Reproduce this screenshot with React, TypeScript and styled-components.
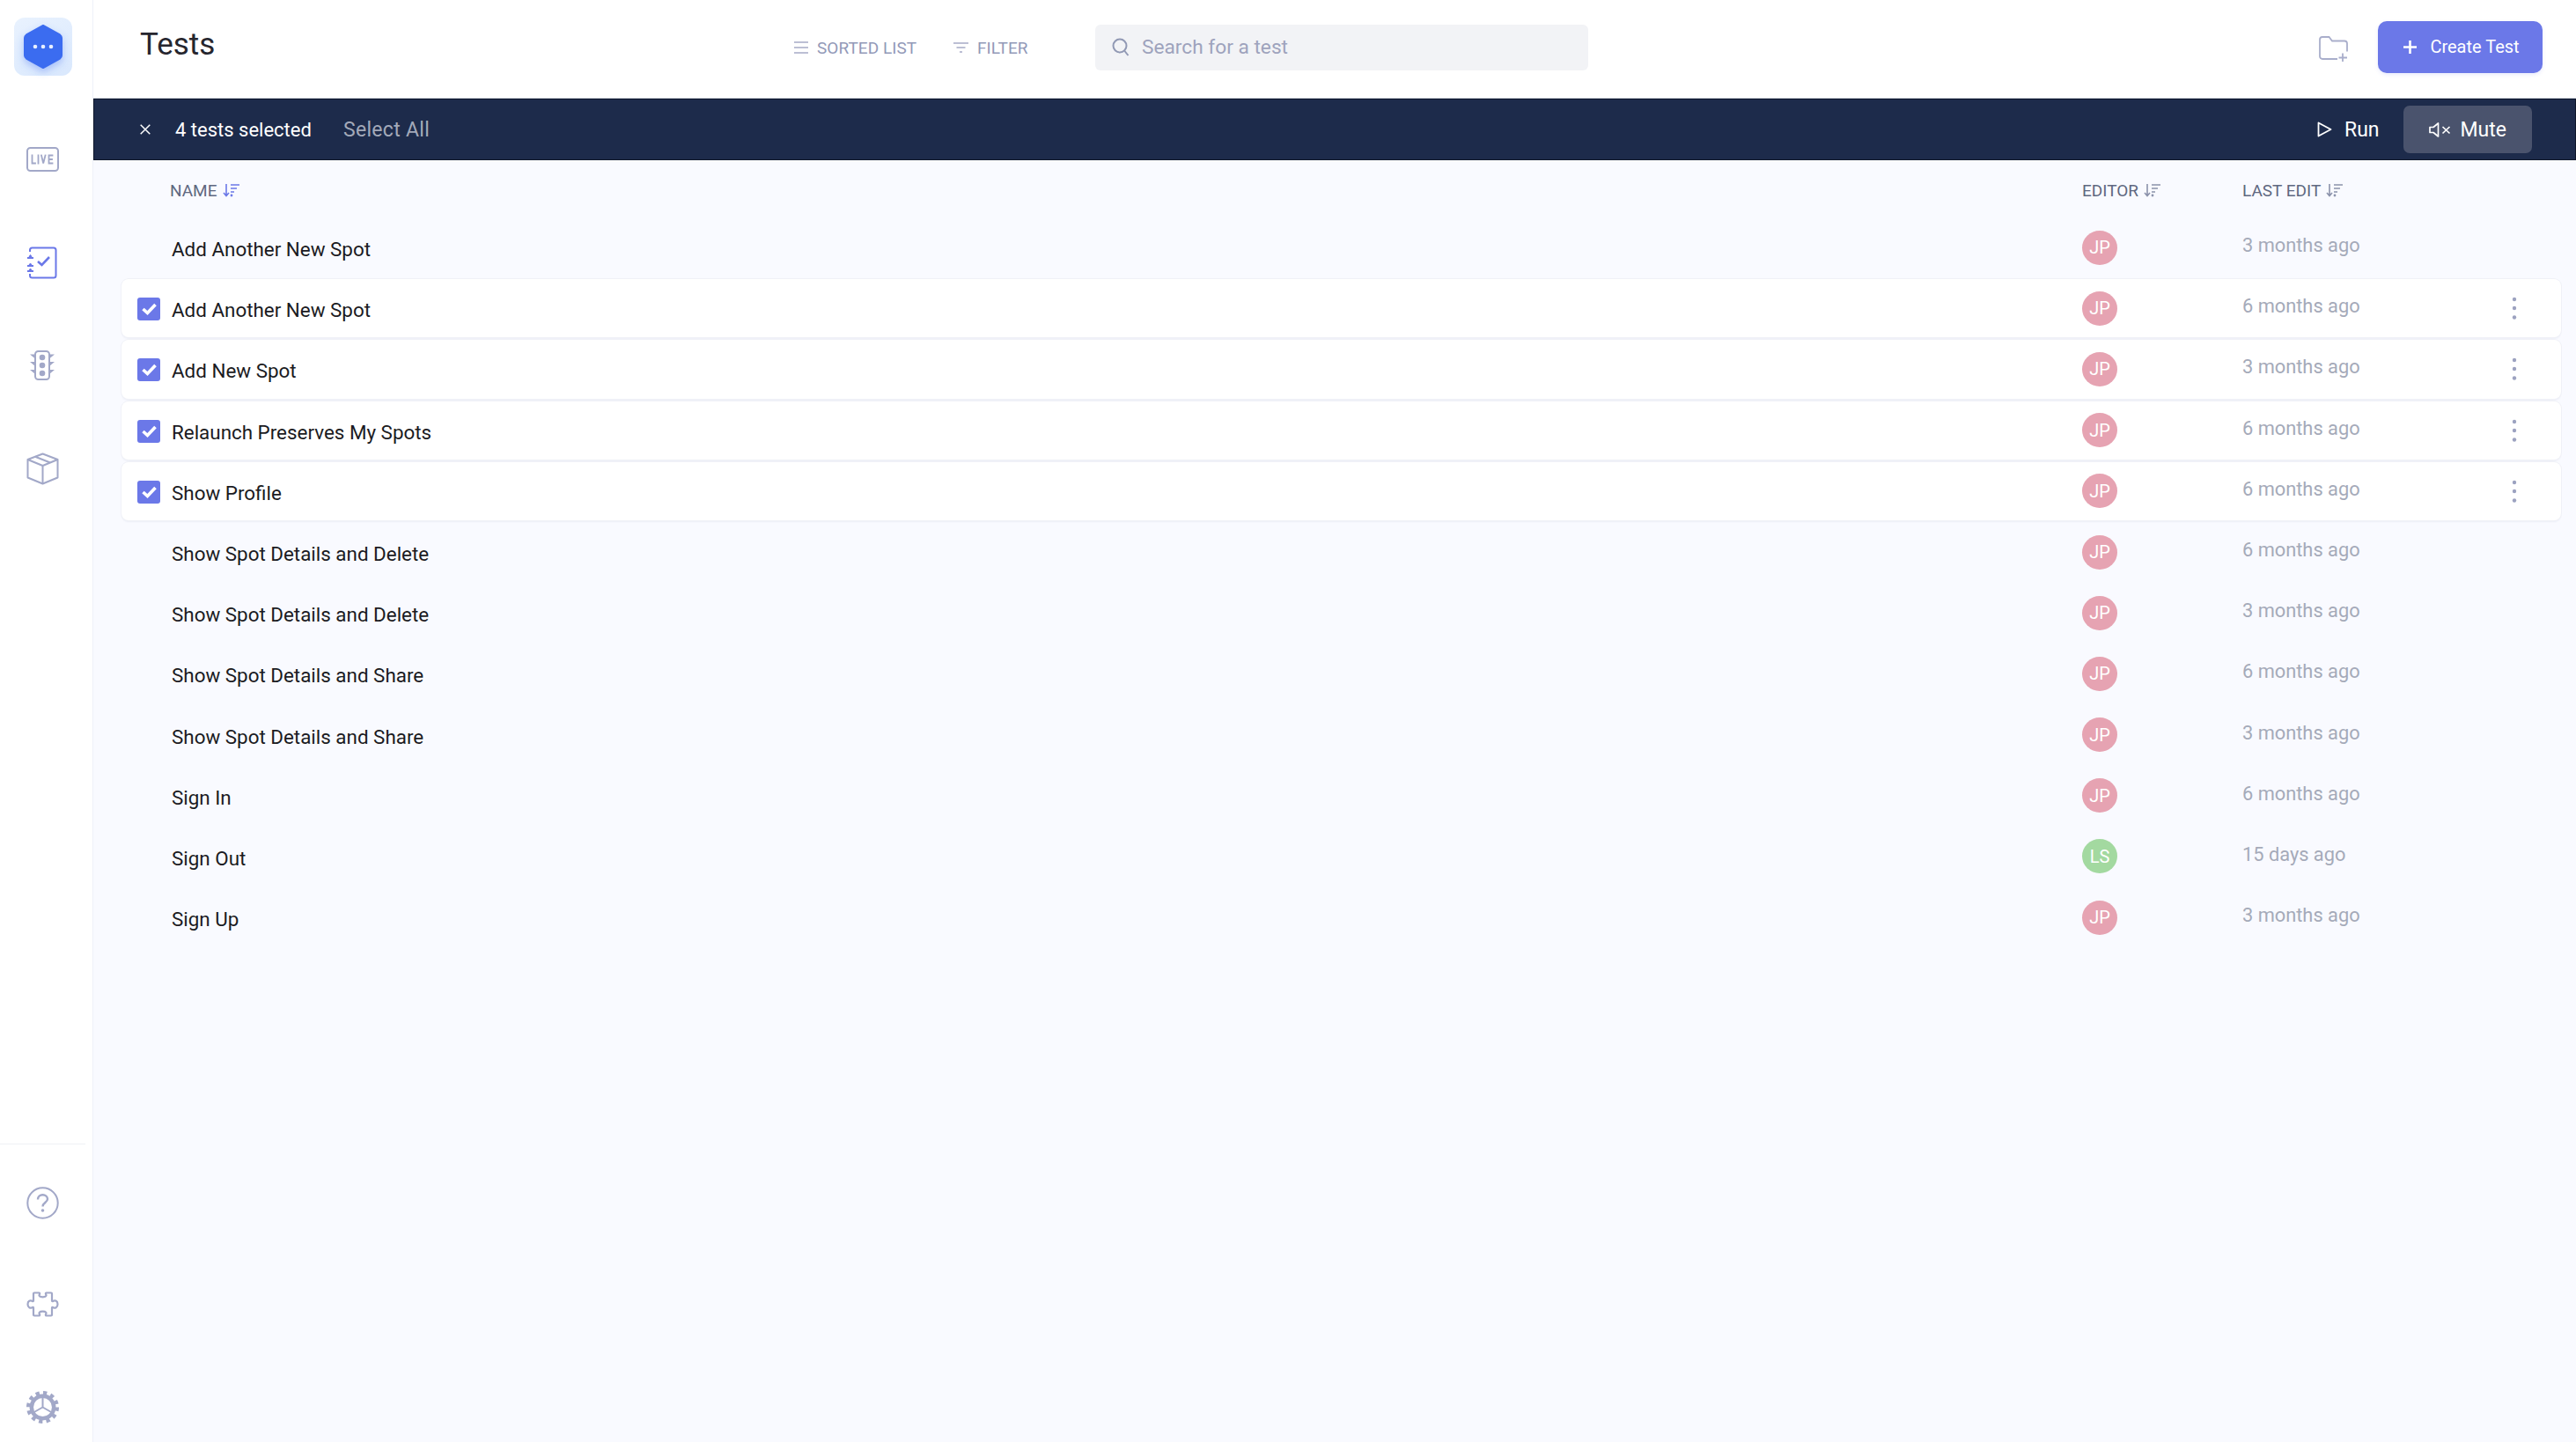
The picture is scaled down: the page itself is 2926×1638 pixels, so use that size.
import React from "react";
import styled, { createGlobalStyle } from "styled-components";

const Global = createGlobalStyle`
  html, body { margin: 0; padding: 0; background: #f9faff; }
  body { font-family: Roboto, "Liberation Sans", sans-serif; overflow: hidden; }
  * { box-sizing: border-box; }
`;

const Page = styled.div`
  display: flex;
  width: 2926px;
  height: 1638px;
  overflow: hidden;
`;

const Sidebar = styled.aside`
  width: 106px;
  height: 100%;
  flex: none;
  display: flex;
  flex-direction: column;
  background: #fff;
  border-right: 1px solid #eef1f8;
`;

const LogoTile = styled.div`
  width: 66px;
  height: 66px;
  margin: 20px 0 0 16px;
  border-radius: 12px;
  background: linear-gradient(150deg, #e9f2fe, #d9e8fd);
  display: flex;
  align-items: center;
  justify-content: center;
`;

const NavStack = styled.nav<{ $gap: number }>`
  display: flex;
  flex-direction: column;
  gap: ${(p) => p.$gap}px;
`;

const TopNav = styled(NavStack)`
  margin-top: 55px;
  flex: 1;
`;

const BottomNav = styled(NavStack)`
  margin-right: 8px;
  border-top: 1px solid #eef0f4;
  padding-top: 26px;
`;

const NavSlot = styled.div`
  width: 96px;
  height: 80px;
  display: flex;
  align-items: center;
  justify-content: center;
`;

const Main = styled.main`
  flex: 1;
  min-width: 0;
  display: flex;
  flex-direction: column;
`;

const Header = styled.header`
  height: 112px;
  flex: none;
  background: #fff;
  border-bottom: 1px solid #cfd5e0;
  display: flex;
  align-items: center;
  padding: 0 38px 0 54px;
`;

const Title = styled.h1`
  width: 742px;
  margin: -11px 0 0 -1px;
  font-size: 35px;
  font-weight: 400;
  color: #26262e;
`;

const ToolButton = styled.div<{ $width: number }>`
  width: ${(p) => p.$width}px;
  margin-top: -3px;
  display: flex;
  align-items: center;
  gap: 9px;
  font-size: 19px;
  letter-spacing: 0.05px;
  color: #9299b8;
  white-space: nowrap;
`;

const SearchBox = styled.div`
  width: 560px;
  height: 52px;
  margin: -4px 0 0 -15px;
  padding: 0 0 0 19px;
  border-radius: 6px;
  background: #f2f3f6;
  display: flex;
  align-items: center;
  gap: 14px;
  font-size: 22.7px;
  color: #9ea3bd;
`;

const FolderSlot = styled.div`
  margin-left: auto;
  margin-right: 34px;
  display: flex;
`;

const CreateButton = styled.div`
  width: 187px;
  height: 59px;
  margin-top: -5px;
  padding-left: 3px;
  border-radius: 10px;
  background: #6b78e8;
  box-shadow: 0 2px 4px rgba(107, 120, 232, 0.15);
  color: #fff;
  font-size: 20px;
  display: flex;
  align-items: center;
  justify-content: center;
  gap: 15px;
`;

const SelectionBar = styled.section`
  height: 70px;
  flex: none;
  background: #1d2b4b;
  border: 1px solid #0f1729;
  display: flex;
  align-items: center;
  padding: 0 49px 0 52px;
  font-size: 23px;
`;

const CloseSlot = styled.div`
  width: 40px;
  display: flex;
`;

const SelectedCount = styled.span`
  color: #fff;
  font-size: 22px;
  width: 191px;
`;

const SelectAll = styled.span`
  color: #a3a9b9;
  letter-spacing: 0.3px;
`;

const BarAction = styled.div<{ $active?: boolean }>`
  height: 54px;
  border-radius: 7px;
  display: flex;
  align-items: center;
  color: #fff;
  gap: ${(p) => (p.$active ? 11 : 14)}px;
  padding: 0 ${(p) => (p.$active ? 29 : 27)}px 0 ${(p) => (p.$active ? 29 : 0)}px;
  background: ${(p) => (p.$active ? "#4a536d" : "transparent")};
`;

const BarActions = styled.div`
  margin-left: auto;
  display: flex;
  align-items: center;
`;

const Content = styled.div`
  flex: 1;
  padding: 0 17px 0 32px;
  background: #f9faff;
`;

const Columns = styled.div`
  display: grid;
  grid-template-columns: 57px 1fr 182px 279px 60px;
  align-items: center;
  padding-right: 23px;
`;

const HeadRow = styled(Columns)`
  height: 66px;
  padding-top: 2px;
  font-size: 19px;
  color: #5f6880;
`;

const HeadCell = styled.div<{ $col: number; $shift?: number }>`
  grid-column: ${(p) => p.$col};
  margin-left: ${(p) => p.$shift ?? 0}px;
  display: flex;
  align-items: center;
  gap: 6px;
`;

const List = styled.div`
  display: flex;
  flex-direction: column;
  gap: 3px;
`;

const Row = styled(Columns)<{ $selected: boolean }>`
  height: 66.2px;
  border-radius: 8px;
  background: ${(p) => (p.$selected ? "#fff" : "transparent")};
  box-shadow: ${(p) => (p.$selected ? "0 0 0 1px #f0f1f7, 0 2px 2px rgba(40, 50, 110, 0.06)" : "none")};
`;

const CheckCell = styled.div`
  padding: 2px 0 0 18px;
  display: flex;
`;

const Checkbox = styled.div`
  width: 26px;
  height: 26px;
  border-radius: 3px;
  background: #6b78e8;
  display: flex;
  align-items: center;
  justify-content: center;
`;

const Name = styled.div`
  font-size: 22.4px;
  color: #1b1b22;
  padding-top: 4px;
`;

const Avatar = styled.div<{ $green: boolean }>`
  width: 40px;
  height: 39px;
  border-radius: 50%;
  background: ${(p) => (p.$green ? "#a3d9a0" : "#e6a3b2")};
  color: #fff;
  font-size: 20px;
  display: flex;
  align-items: center;
  justify-content: center;
`;

const DateText = styled.div`
  font-size: 21.8px;
  color: #a5aab9;
  margin-top: -5px;
`;

const Kebab = styled.div`
  display: flex;
  justify-content: center;
`;

const stroke = "#a2a8c8";

const SortIcon = ({ color = "#8b92ab" }: { color?: string }) => (
  <svg width="19" height="16" viewBox="0 0 19 16" fill="none" stroke={color} strokeWidth="1.6">
    <path d="M4 1v13M1 11l3 3.5 3-3.5" />
    <path d="M9 2h10M9 6h7M9 10h4" />
    <circle cx="10" cy="14" r=".6" />
  </svg>
);

const Logo = () => (
  <svg width="50" height="56" viewBox="0 0 50 56" style={{ overflow: "visible" }}>
    <defs>
      <filter id="glow" x="-30%" y="-30%" width="160%" height="160%">
        <feDropShadow dx="0" dy="4" stdDeviation="4" floodColor="#3b6cf0" floodOpacity=".35" />
      </filter>
    </defs>
    <path
      d="M25 4 L44 14.5 Q46 16 46 18 V38 Q46 40 44 41.5 L25 52 L6 41.5 Q4 40 4 38 V18 Q4 16 6 14.5 Z"
      fill="#3b6cf0"
      stroke="#3b6cf0"
      strokeWidth="2"
      strokeLinejoin="round"
      filter="url(#glow)"
    />
    <circle cx="16" cy="28" r="2.3" fill="#e8f0ff" />
    <circle cx="25" cy="28" r="2.3" fill="#e8f0ff" />
    <circle cx="34" cy="28" r="2.3" fill="#e8f0ff" />
  </svg>
);

const LiveIcon = () => (
  <svg width="37" height="28" viewBox="0 0 37 28" fill="none">
    <rect x="1" y="1" width="35" height="26" rx="3.5" stroke={stroke} strokeWidth="2" />
    <g stroke={stroke} strokeWidth="1.8" strokeLinecap="square">
      <path d="M6.500 9.500v9h3.500M13.500 9.500v9M17 9.500l2.200 9 2.300-9M25.500 9.500h4M25.500 14h3.500M25.500 18.500h4M25.500 9.500v9" />
    </g>
  </svg>
);

const TestsIcon = () => (
  <svg width="36" height="37" viewBox="0 0 36 37" fill="none" stroke="#6b78e8" strokeWidth="2">
    <path d="M4 6V4a2.500 2.500 0 0 1 2.500-2.500H31a2.500 2.500 0 0 1 2.500 2.500v29a2.500 2.500 0 0 1-2.500 2.500H6.500A2.500 2.500 0 0 1 4 33v-2" />
    <path d="M13 17l4.500 4L26 12" strokeWidth="2.600" />
    <path d="M1 13h7M1 22h7M1 28h7" />
    <path d="M4.500 9.500l1.500 2H3zM4.500 19l1.500 2H3zM4.500 25l1.500 2H3z" fill="#6b78e8" strokeWidth="1" />
  </svg>
);

const TrafficIcon = () => (
  <svg width="28" height="34" viewBox="0 0 28 34" fill="none">
    <rect x="6" y="1" width="16" height="32" rx="3.500" stroke={stroke} strokeWidth="2" />
    <circle cx="14" cy="8" r="3.300" fill={stroke} />
    <circle cx="14" cy="17" r="3.300" fill={stroke} />
    <circle cx="14" cy="26" r="3.300" fill={stroke} />
    <path d="M0 4.500h6v5zM28 4.500h-6v5zM0 13h6v5zM28 13h-6v5zM0 22h6v5zM28 22h-6v5z" fill={stroke} />
  </svg>
);

const BoxIcon = () => (
  <svg width="37" height="37" viewBox="0 0 37 37" fill="none" stroke={stroke} strokeWidth="2" strokeLinejoin="round">
    <path d="M18.500 1.500L35.500 8v20.500l-17 7-17-7V8z" />
    <path d="M1.500 8l17 7 17-7M18.500 15v20.500M10 4.800l17 6.700" />
  </svg>
);

const HelpIcon = () => (
  <svg width="37" height="37" viewBox="0 0 37 37" fill="none" stroke={stroke} strokeWidth="2">
    <circle cx="18.500" cy="18.500" r="17.200" />
    <path d="M13 14.500c0-3.200 2.500-5.300 5.500-5.300s5.500 2 5.500 4.800c0 4-5.500 4-5.500 8.500" strokeWidth="2.400" />
    <circle cx="18.500" cy="27" r="1.800" fill={stroke} stroke="none" />
  </svg>
);

const PuzzleIcon = () => (
  <svg width="37" height="29" viewBox="0 0 37 29" fill="none" stroke={stroke} strokeWidth="2.200" strokeLinejoin="round" style={{ marginTop: -2 }}>
    <path d="M9 1.500h5.500c.8 0 .8 1 .3 1.800-.8 1.300-.3 3 3.700 3s4.500-1.700 3.700-3c-.5-.8-.5-1.800.3-1.800H28a1 1 0 0 1 1 1v8c0 .8.8.8 1.600.3 1.800-1 4.900-.3 4.900 3.700s-3.100 4.700-4.900 3.700c-.8-.5-1.600-.5-1.600.3v8a1 1 0 0 1-1 1h-5.500c-.8 0-.8-1-.3-1.800.8-1.300.3-3-3.700-3s-4.500 1.700-3.700 3c.5.8.5 1.800-.3 1.800H9a1 1 0 0 1-1-1v-8c0-.8-.8-.8-1.600-.3-1.800 1-4.900.3-4.900-3.700s3.100-4.700 4.900-3.700c.8.500 1.600.5 1.600-.3v-8a1 1 0 0 1 1-1z" />
  </svg>
);

const GearIcon = () => (
  <svg width="37" height="37" viewBox="0 0 37 37" fill="none">
    <circle cx="18.500" cy="18.500" r="16" stroke={stroke} strokeWidth="5" strokeDasharray="4.200 4.180" />
    <circle cx="18.500" cy="18.500" r="12.700" stroke={stroke} strokeWidth="4.500" />
    <path d="M18.500 18.500V6M18.500 18.500L29 24.500M18.500 18.500L8 24.500" stroke={stroke} strokeWidth="2" />
  </svg>
);

const ListIcon = () => (
  <svg width="18" height="16" viewBox="0 0 18 16" stroke="#a6abc6" strokeWidth="1.600">
    <path d="M1 2h16M1 8h16M1 14h16" />
  </svg>
);

const FilterIcon = () => (
  <svg width="19" height="14" viewBox="0 0 19 14" stroke="#a6abc6" strokeWidth="1.600">
    <path d="M1 2h17M4.500 7h10M8 12h3" />
  </svg>
);

const SearchIcon = () => (
  <svg width="20" height="21" viewBox="0 0 20 21" fill="none" stroke="#9199b4" strokeWidth="2">
    <circle cx="9" cy="9" r="7.500" />
    <path d="M14.500 15l4 5" />
  </svg>
);

const FolderPlusIcon = () => (
  <svg width="33" height="30" viewBox="0 0 33 30" fill="none" stroke="#a9aecb" strokeWidth="1.800">
    <path d="M21 26H4a3 3 0 0 1-3-3V4a3 3 0 0 1 3-3h7.500l3.500 4.500h14a3 3 0 0 1 3 3v9" />
    <path d="M27 19.500v9.500M22.500 24.500h9.500" />
  </svg>
);

const PlusIcon = () => (
  <svg width="15" height="15" viewBox="0 0 15 15" stroke="#fff" strokeWidth="2.600">
    <path d="M7.500 0v15M0 7.500h15" />
  </svg>
);

const CloseIcon = () => (
  <svg width="12" height="12" viewBox="0 0 12 12" stroke="#fff" strokeWidth="1.500">
    <path d="M.7.700l10.600 10.600M11.300.700L.7 11.300" />
  </svg>
);

const PlayIcon = () => (
  <svg width="17" height="18" viewBox="0 0 17 18" fill="none" stroke="#fff" strokeWidth="1.800" strokeLinejoin="round">
    <path d="M1.500 1.500L15.500 9l-14 7.500z" />
  </svg>
);

const MuteIcon = () => (
  <svg width="25" height="17" viewBox="0 0 25 17" fill="none" stroke="#fff" strokeWidth="1.700" strokeLinejoin="round">
    <path d="M1 5.500h4L10.500 1v15L5 11.500H1z" />
    <path d="M15.500 5l8 7.500M23.500 5l-8 7.500" />
  </svg>
);

const CheckIcon = () => (
  <svg width="17" height="14" viewBox="0 0 17 14" fill="none" stroke="#fff" strokeWidth="3.600">
    <path d="M1.500 7l5 4.500 9-9.500" />
  </svg>
);

const KebabIcon = () => (
  <svg width="6" height="26" viewBox="0 0 6 26" fill="#9ca2c0">
    <circle cx="3" cy="3" r="2.200" />
    <circle cx="3" cy="13" r="2.200" />
    <circle cx="3" cy="23.500" r="2.200" />
  </svg>
);

const tests = [
  { name: "Add Another New Spot", who: "JP", when: "3 months ago", selected: false },
  { name: "Add Another New Spot", who: "JP", when: "6 months ago", selected: true },
  { name: "Add New Spot", who: "JP", when: "3 months ago", selected: true },
  { name: "Relaunch Preserves My Spots", who: "JP", when: "6 months ago", selected: true },
  { name: "Show Profile", who: "JP", when: "6 months ago", selected: true },
  { name: "Show Spot Details and Delete", who: "JP", when: "6 months ago", selected: false },
  { name: "Show Spot Details and Delete", who: "JP", when: "3 months ago", selected: false },
  { name: "Show Spot Details and Share", who: "JP", when: "6 months ago", selected: false },
  { name: "Show Spot Details and Share", who: "JP", when: "3 months ago", selected: false },
  { name: "Sign In", who: "JP", when: "6 months ago", selected: false },
  { name: "Sign Out", who: "LS", when: "15 days ago", selected: false },
  { name: "Sign Up", who: "JP", when: "3 months ago", selected: false },
];

export default function App() {
  return (
    <Page>
      <Global />
      <Sidebar>
        <LogoTile>
          <Logo />
        </LogoTile>
        <TopNav $gap={37}>
          <NavSlot><LiveIcon /></NavSlot>
          <NavSlot><TestsIcon /></NavSlot>
          <NavSlot><TrafficIcon /></NavSlot>
          <NavSlot><BoxIcon /></NavSlot>
        </TopNav>
        <BottomNav $gap={36}>
          <NavSlot><HelpIcon /></NavSlot>
          <NavSlot><PuzzleIcon /></NavSlot>
          <NavSlot><GearIcon /></NavSlot>
        </BottomNav>
      </Sidebar>
      <Main>
        <Header>
          <Title>Tests</Title>
          <ToolButton $width={181}><ListIcon />SORTED LIST</ToolButton>
          <ToolButton $width={177}><FilterIcon />FILTER</ToolButton>
          <SearchBox><SearchIcon />Search for a test</SearchBox>
          <FolderSlot><FolderPlusIcon /></FolderSlot>
          <CreateButton><PlusIcon />Create Test</CreateButton>
        </Header>
        <SelectionBar>
          <CloseSlot><CloseIcon /></CloseSlot>
          <SelectedCount>4 tests selected</SelectedCount>
          <SelectAll>Select All</SelectAll>
          <BarActions>
            <BarAction><PlayIcon />Run</BarAction>
            <BarAction $active><MuteIcon />Mute</BarAction>
          </BarActions>
        </SelectionBar>
        <Content>
          <HeadRow>
            <HeadCell $col={2} $shift={-2}>NAME <SortIcon color="#6b78e8" /></HeadCell>
            <HeadCell $col={3}>EDITOR <SortIcon /></HeadCell>
            <HeadCell $col={4}>LAST EDIT <SortIcon /></HeadCell>
          </HeadRow>
          <List>
            {tests.map((t, i) => (
              <Row key={i} $selected={t.selected}>
                <CheckCell>
                  {t.selected && <Checkbox><CheckIcon /></Checkbox>}
                </CheckCell>
                <Name>{t.name}</Name>
                <Avatar $green={t.who === "LS"}>{t.who}</Avatar>
                <DateText>{t.when}</DateText>
                <Kebab>{t.selected && <KebabIcon />}</Kebab>
              </Row>
            ))}
          </List>
        </Content>
      </Main>
    </Page>
  );
}
